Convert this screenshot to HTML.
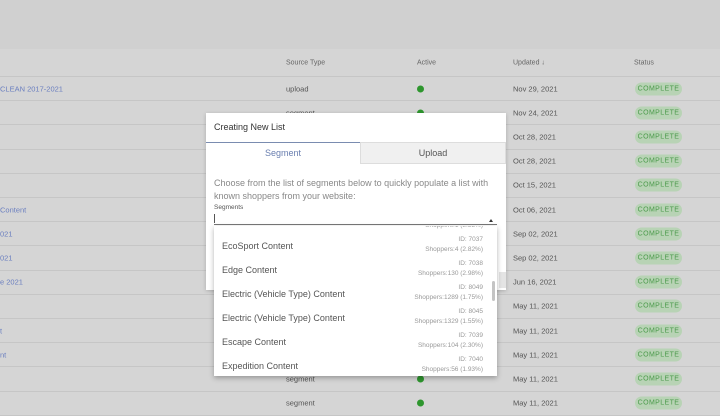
<!DOCTYPE html>
<html><head><style>
*{margin:0;padding:0;box-sizing:border-box}
body{width:720px;height:405px;overflow:hidden;background:#d5d5d5;font-family:"Liberation Sans",sans-serif;position:relative}
.top{position:absolute;left:0;top:0;width:720px;height:49px;background:#d0d0d0}
.hdr{position:absolute;top:49px;left:0;width:720px;height:28px;border-bottom:1px solid #c6c6c6;font-size:7px;color:#666}
.hdr span,.row span{position:absolute;top:50%;transform:translateY(-50%);white-space:nowrap}
.row{position:absolute;left:0;width:720px;height:24.2px;border-bottom:1px solid #c6c6c6;font-size:7.5px;color:#555}
.lk{color:#6b7fc0}
.dot{width:7px;height:7px;border-radius:50%;background:#2e962e;left:417px}
.badge{left:635px;width:47px;height:13px;border-radius:7px;background:#b8d3b5;color:#4a9a4a;font-size:7px;text-align:center;line-height:13px;letter-spacing:.4px}
.modal{position:absolute;left:206px;top:113px;width:300px;height:177px;background:#fff;box-shadow:0 1px 4px rgba(0,0,0,.2)}
.title{position:absolute;left:8px;top:9px;font-size:9px;color:#333}
.tab1{position:absolute;left:0;top:29px;width:154px;height:23px;border-top:1px solid #7a8cb0;color:#6a7fb0;font-size:9px;text-align:center;line-height:21px}
.tab2{position:absolute;left:154px;top:29px;width:146px;height:22px;background:#f0f0f0;border:1px solid #ddd;color:#555;font-size:9px;text-align:center;line-height:20px}
.desc{position:absolute;left:8px;top:64px;width:290px;font-size:9px;line-height:12.5px;color:#888}
.lbl{position:absolute;left:8px;top:91px;font-size:6.5px;color:#555}
.inp{position:absolute;left:8px;top:99px;width:283px;height:13px;border-bottom:1px solid #777}
.inp:before{content:"";position:absolute;left:0;top:2px;width:1px;height:9px;background:#555}
.inp:after{content:"";position:absolute;right:4px;top:5px;border:2.5px solid transparent;border-bottom:3px solid #333}
.dd{position:absolute;left:214px;top:226px;width:283px;height:150px;background:#fff;box-shadow:0 2px 5px rgba(0,0,0,.3);overflow:hidden}
.it{position:absolute;left:0;width:283px;height:24px}
.it .n{position:absolute;left:8px;top:7px;font-size:9px;color:#555}
.it .r{position:absolute;right:14px;top:1px;font-size:6.5px;color:#999;text-align:right;line-height:10px}
.sb{position:absolute;left:278px;top:55px;width:3px;height:20px;background:#c4c4c4;border-radius:2px}
</style></head><body>
<div class="top"></div>
<div class="hdr"><span style="left:286px">Source Type</span><span style="left:417px">Active</span><span style="left:513px">Updated &#8595;</span><span style="left:634px">Status</span></div>

<div class="row" style="top:77px"><span class="lk" style="left:0">CLEAN 2017-2021</span><span style="left:286px">upload</span><span class="dot"></span><span style="left:513px">Nov 29, 2021</span><span class="badge">COMPLETE</span></div>
<div class="row" style="top:101.2px"><span style="left:286px">segment</span><span class="dot"></span><span style="left:513px">Nov 24, 2021</span><span class="badge">COMPLETE</span></div>
<div class="row" style="top:125.4px"><span style="left:513px">Oct 28, 2021</span><span class="badge">COMPLETE</span></div>
<div class="row" style="top:149.6px"><span style="left:513px">Oct 28, 2021</span><span class="badge">COMPLETE</span></div>
<div class="row" style="top:173.8px"><span style="left:513px">Oct 15, 2021</span><span class="badge">COMPLETE</span></div>
<div class="row" style="top:198px"><span class="lk" style="left:0">Content</span><span style="left:513px">Oct 06, 2021</span><span class="badge">COMPLETE</span></div>
<div class="row" style="top:222.2px"><span class="lk" style="left:0">021</span><span style="left:513px">Sep 02, 2021</span><span class="badge">COMPLETE</span></div>
<div class="row" style="top:246.4px"><span class="lk" style="left:0">021</span><span style="left:513px">Sep 02, 2021</span><span class="badge">COMPLETE</span></div>
<div class="row" style="top:270.6px"><span class="lk" style="left:0">e 2021</span><span style="left:513px">Jun 16, 2021</span><span class="badge">COMPLETE</span></div>
<div class="row" style="top:294.8px"><span style="left:513px">May 11, 2021</span><span class="badge">COMPLETE</span></div>
<div class="row" style="top:319px"><span class="lk" style="left:0">t</span><span style="left:513px">May 11, 2021</span><span class="badge">COMPLETE</span></div>
<div class="row" style="top:343.2px"><span class="lk" style="left:0">nt</span><span style="left:513px">May 11, 2021</span><span class="badge">COMPLETE</span></div>
<div class="row" style="top:367.4px"><span style="left:286px">segment</span><span class="dot"></span><span style="left:513px">May 11, 2021</span><span class="badge">COMPLETE</span></div>
<div class="row" style="top:391.6px"><span style="left:286px">segment</span><span class="dot"></span><span style="left:513px">May 11, 2021</span><span class="badge">COMPLETE</span></div>

<div class="modal">
<div class="title">Creating New List</div>
<div class="tab1">Segment</div>
<div class="tab2">Upload</div>
<div class="desc">Choose from the list of segments below to quickly populate a list with known shoppers from your website:</div>
<div class="lbl">Segments</div>
<div class="inp"></div>
<div style="position:absolute;left:293px;top:159px;width:7px;height:16px;background:#e4e4e4"></div>
</div>

<div class="dd">
<div class="it" style="top:-16px"><div class="r">ID: 7036<br>Shoppers:1 (8.33%)</div></div>
<div class="it" style="top:8px"><div class="n">EcoSport Content</div><div class="r">ID: 7037<br>Shoppers:4 (2.82%)</div></div>
<div class="it" style="top:32px"><div class="n">Edge Content</div><div class="r">ID: 7038<br>Shoppers:130 (2.98%)</div></div>
<div class="it" style="top:56px"><div class="n">Electric (Vehicle Type) Content</div><div class="r">ID: 8049<br>Shoppers:1289 (1.75%)</div></div>
<div class="it" style="top:80px"><div class="n">Electric (Vehicle Type) Content</div><div class="r">ID: 8045<br>Shoppers:1329 (1.55%)</div></div>
<div class="it" style="top:104px"><div class="n">Escape Content</div><div class="r">ID: 7039<br>Shoppers:104 (2.30%)</div></div>
<div class="it" style="top:128px"><div class="n">Expedition Content</div><div class="r">ID: 7040<br>Shoppers:56 (1.93%)</div></div>
<div class="sb"></div>
</div>
</body></html>
